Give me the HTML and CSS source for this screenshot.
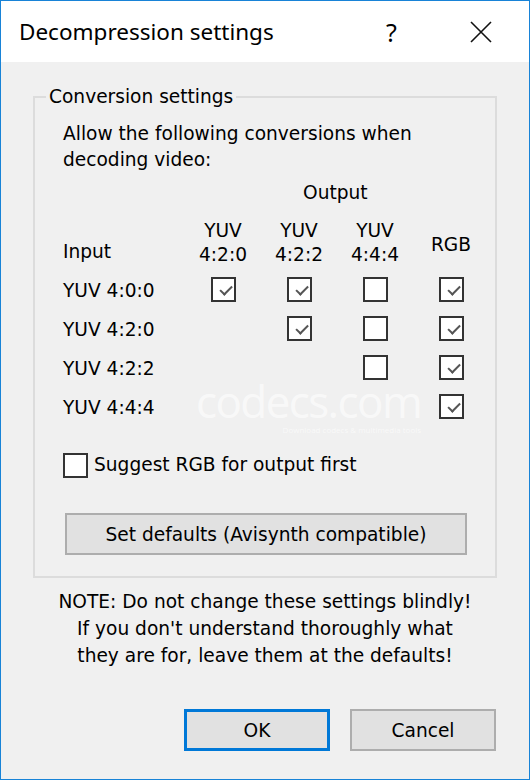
FILE: index.html
```html
<!DOCTYPE html>
<html lang="en">
<head>
    <meta charset="UTF-8">
    <title>Decompression settings</title>
    <link rel="stylesheet" href="styles.css">
</head>
<body>

    <div class="dialog">
        <div class="titlebar">
            <span class="title">Decompression settings</span>
            <span class="help">?</span>
            <span class="close">
                <svg width="22" height="22" viewBox="0 0 22 22"><path d="M1 1 L21 21 M21 1 L1 21" stroke="#111" stroke-width="1.6" fill="none"/></svg>
            </span>
        </div>

        <div class="content">
            <fieldset class="group">
                <legend>Conversion settings</legend>
                <p class="intro">Allow the following conversions when<br>decoding video:</p>
                <div class="output-label">Output</div>

                <div class="matrix">
                    <!-- 水印放在最前面，复选框盖在上面 -->
                    <div class="watermark">codecs.com<small>Download codecs &amp; multimedia tools</small></div>

                    <div class="head input-head">Input</div>
                    <div class="head">YUV<br>4:2:0</div>
                    <div class="head">YUV<br>4:2:2</div>
                    <div class="head">YUV<br>4:4:4</div>
                    <div class="head rgb-head">RGB</div>

                    <div class="row-label">YUV 4:0:0</div>
                    <div class="cell"><span class="box checked"></span></div>
                    <div class="cell"><span class="box checked"></span></div>
                    <div class="cell"><span class="box"></span></div>
                    <div class="cell"><span class="box checked"></span></div>

                    <div class="row-label">YUV 4:2:0</div>
                    <div class="cell"></div>
                    <div class="cell"><span class="box checked"></span></div>
                    <div class="cell"><span class="box"></span></div>
                    <div class="cell"><span class="box checked"></span></div>

                    <div class="row-label">YUV 4:2:2</div>
                    <div class="cell"></div>
                    <div class="cell"></div>
                    <div class="cell"><span class="box"></span></div>
                    <div class="cell"><span class="box checked"></span></div>

                    <div class="row-label">YUV 4:4:4</div>
                    <div class="cell"></div>
                    <div class="cell"></div>
                    <div class="cell"></div>
                    <div class="cell"><span class="box checked"></span></div>
                </div>

                <label class="suggest"><span class="box"></span>Suggest RGB for output first</label>

                <button class="btn btn-defaults">Set defaults (Avisynth compatible)</button>
            </fieldset>

            <p class="note">NOTE: Do not change these settings blindly!<br>If you don't understand thoroughly what<br>they are for, leave them at the defaults!</p>

            <div class="actions">
                <button class="btn btn-ok">OK</button>
                <button class="btn">Cancel</button>
            </div>
        </div>
    </div>

</body>
</html>
```

FILE: styles.css
```css
* {
    margin: 0;
    padding: 0;
    box-sizing: border-box;
}

body {
    width: 530px;
    height: 780px;
    font-family: "DejaVu Sans", sans-serif;
    font-size: 18.6px;
    color: #000;
}

.dialog {
    width: 530px;
    height: 780px;
    border: 1px solid #1883d7;
    background: #f0f0f0;
    display: flex;
    flex-direction: column;
}

.titlebar {
    height: 61px;
    background: #fff;
    display: flex;
    align-items: center;
    padding-left: 18px;
    font-family: "Noto Sans", sans-serif;
}

.title {
    font-size: 22.5px;
    flex: 1;
}

.help {
    font-size: 25px;
    width: 22px;
    margin-right: 62px;
}

.close {
    display: flex;
    margin-right: 37px;
}

.content {
    flex: 1;
    padding: 24px 32px 0 32px;
}

/* 分组框 */
.group {
    border: 2px solid #dcdcdc;
    height: 492px;
    padding: 0 0 0 28px;
}

.group legend {
    margin-left: -17px;
    padding: 0 3px;
    line-height: 22px;
}

.intro {
    line-height: 26px;
    margin-top: 13px;
}

.output-label {
    margin-left: 240px;
    margin-top: 7px;
    line-height: 26px;
}

.matrix {
    display: grid;
    grid-template-columns: 122px repeat(4, 76px);
    grid-template-rows: 58px;
    grid-auto-rows: 39px;
    position: relative;
    margin-top: 13px;
}

.head {
    grid-row: 1;
    text-align: center;
    line-height: 24px;
    height: 56px;
    align-self: start;
}

.input-head {
    padding-top: 21px;
    text-align: left;
}

.rgb-head {
    padding-top: 14px;
}

.row-label {
    line-height: 24px;
    padding-top: 2px;
}

.cell {
    display: flex;
    justify-content: center;
}

.box {
    display: inline-block;
    width: 25px;
    height: 25px;
    border: 2px solid #333;
    background: #fff;
    position: relative;
}

.box.checked::after {
    content: "";
    position: absolute;
    left: 5px;
    top: 3px;
    width: 10px;
    height: 5px;
    border-left: 2px solid #555;
    border-bottom: 2px solid #555;
    transform: rotate(-45deg) translate(-1px, 4px);
}

.watermark {
    position: absolute;
    left: 133px;
    top: 160px;
    font-family: "Open Sans", sans-serif;
    font-size: 44px;
    letter-spacing: -1.6px;
    color: rgba(255, 255, 255, 0.6);
    line-height: 44px;
}

.watermark small {
    display: block;
    font-size: 8px;
    line-height: 10px;
    margin-top: 2px;
    text-align: right;
    letter-spacing: 0;
}

.suggest {
    display: flex;
    align-items: center;
    gap: 6px;
    margin-top: 19px;
    line-height: 26px;
}

.btn {
    font-family: inherit;
    font-size: 18.6px;
    background: #e1e1e1;
    border: 2px solid #adadad;
    color: #000;
    height: 42px;
}

.btn-defaults {
    width: 402px;
    margin: 35px 0 0 2px;
}

.note {
    text-align: center;
    line-height: 27px;
    margin-top: 10px;
}

.actions {
    display: flex;
    justify-content: flex-end;
    gap: 20px;
    margin-top: 40px;
    margin-right: 1px;
}

.actions .btn {
    width: 146px;
}

.btn-ok {
    border: 3px solid #0078d7;
}
```
